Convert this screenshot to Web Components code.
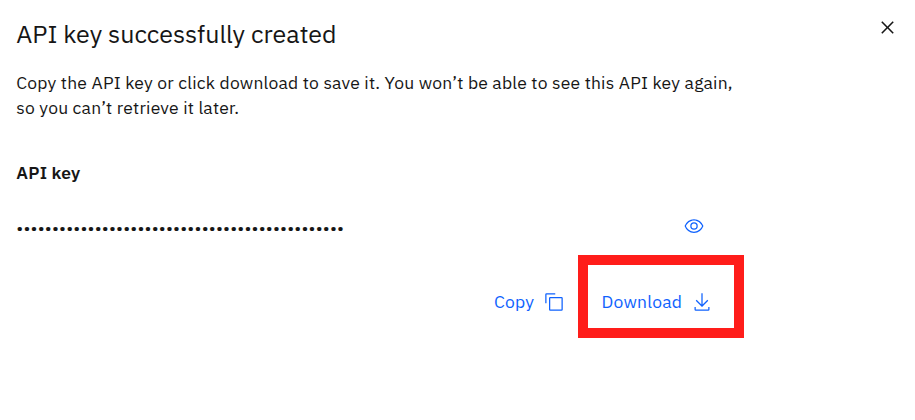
<!DOCTYPE html>
<html lang="en"><head><meta charset="utf-8"><title>API key successfully created</title>
<style>
body{margin:0;background:#fff;color:#161616;font-family:"IBM Plex Sans",Roboto,"Noto Sans",sans-serif}
</style></head><body>
<api-key-dialog></api-key-dialog>
<script>
const icons={
close:'<path d="M24 9.4 22.6 8 16 14.6 9.4 8 8 9.4 14.6 16 8 22.6 9.4 24 16 17.4 22.6 24 24 22.6 17.4 16Z"/>',
view:'<path d="M30.94 15.66A16.69 16.69 0 0 0 16 5 16.69 16.69 0 0 0 1.06 15.66a1 1 0 0 0 0 .68A16.69 16.69 0 0 0 16 27 16.69 16.69 0 0 0 30.94 16.34a1 1 0 0 0 0-.68ZM16 25c-5.3 0-10.9-3.93-12.93-9C5.1 10.93 10.7 7 16 7s10.9 3.93 12.93 9C26.9 21.07 21.3 25 16 25ZM16 10a6 6 0 1 0 6 6 6 6 0 0 0-6-6Zm0 10a4 4 0 1 1 4-4 4 4 0 0 1-4 4Z"/>',
copy:'<path d="M28 10V28H10V10H28m0-2H10a2 2 0 0 0-2 2V28a2 2 0 0 0 2 2H28a2 2 0 0 0 2-2V10a2 2 0 0 0-2-2Z"/><path d="M4 18H2V4A2 2 0 0 1 4 2H18V4H4Z"/>',
download:'<path d="M26 24v4H6v-4H4v4a2 2 0 0 0 2 2h20a2 2 0 0 0 2-2v-4ZM26 14l-1.41-1.41L17 20.17V2h-2v18.17l-7.59-7.58L6 14l10 10Z"/>'};
customElements.define('line-icon',class extends HTMLElement{
 connectedCallback(){this.attachShadow({mode:'open'}).innerHTML=`<style>:host{display:block;flex:none;width:var(--size,20px);height:var(--size,20px)}svg{display:block;width:100%;height:100%;fill:currentColor}</style><svg viewBox="0 0 32 32">${icons[this.getAttribute('name')]}</svg>`}});
customElements.define('ghost-button',class extends HTMLElement{
 connectedCallback(){this.attachShadow({mode:'open'}).innerHTML=`<style>:host{display:flex;box-sizing:border-box;align-items:center;justify-content:space-between;height:83px;padding-top:10px;color:#0f62fe;font-size:17.5px;line-height:24px;letter-spacing:.2px;white-space:nowrap}:host([highlighted]){border:10px solid #ff1d1a}</style><slot></slot><line-icon name="${this.getAttribute('icon')}"></line-icon>`}});
customElements.define('api-key-dialog',class extends HTMLElement{
 connectedCallback(){this.attachShadow({mode:'open'}).innerHTML=`<style>
:host{display:block;box-sizing:border-box;width:915px;height:420px;padding:15px 15px 0 16.25px;background:#fff}
header{display:flex;justify-content:space-between;height:55px}
h1{margin:0;font-weight:400;font-size:25px;line-height:38px;white-space:nowrap}
header line-icon{--size:25px}
p{margin:0;font-size:17.5px;line-height:25px;letter-spacing:.2px;white-space:nowrap}
h2{margin:40px 0 0;font-size:17.5px;font-weight:600;line-height:26px;letter-spacing:.2px}
.secret{display:flex;align-items:center;justify-content:space-between;width:687.25px;height:30px;margin-top:25px}
.dots{padding-top:2px;font-size:17.5px;letter-spacing:.2px;white-space:nowrap}
.secret line-icon{color:#0f62fe}
.actions{display:flex;justify-content:flex-end;gap:13px;width:727.75px;margin-top:14px}
.copy{width:71px;padding-right:1px}
.download{width:166px;padding-left:13.6px;padding-right:22px}
</style>
<header><h1><span>API key successfully created</span></h1><line-icon name="close"></line-icon></header>
<p><span>Copy the API key or click download to save it. You won’t be able to see this API key again,</span><br><span>so you can’t retrieve it later.</span></p>
<h2><span>API key</span></h2>
<div class="secret"><span class="dots">${'•'.repeat(46)}</span><line-icon name="view"></line-icon></div>
<div class="actions"><ghost-button class="copy" icon="copy">Copy</ghost-button><ghost-button class="download" icon="download" highlighted>Download</ghost-button></div>`}});
</script></body></html>
